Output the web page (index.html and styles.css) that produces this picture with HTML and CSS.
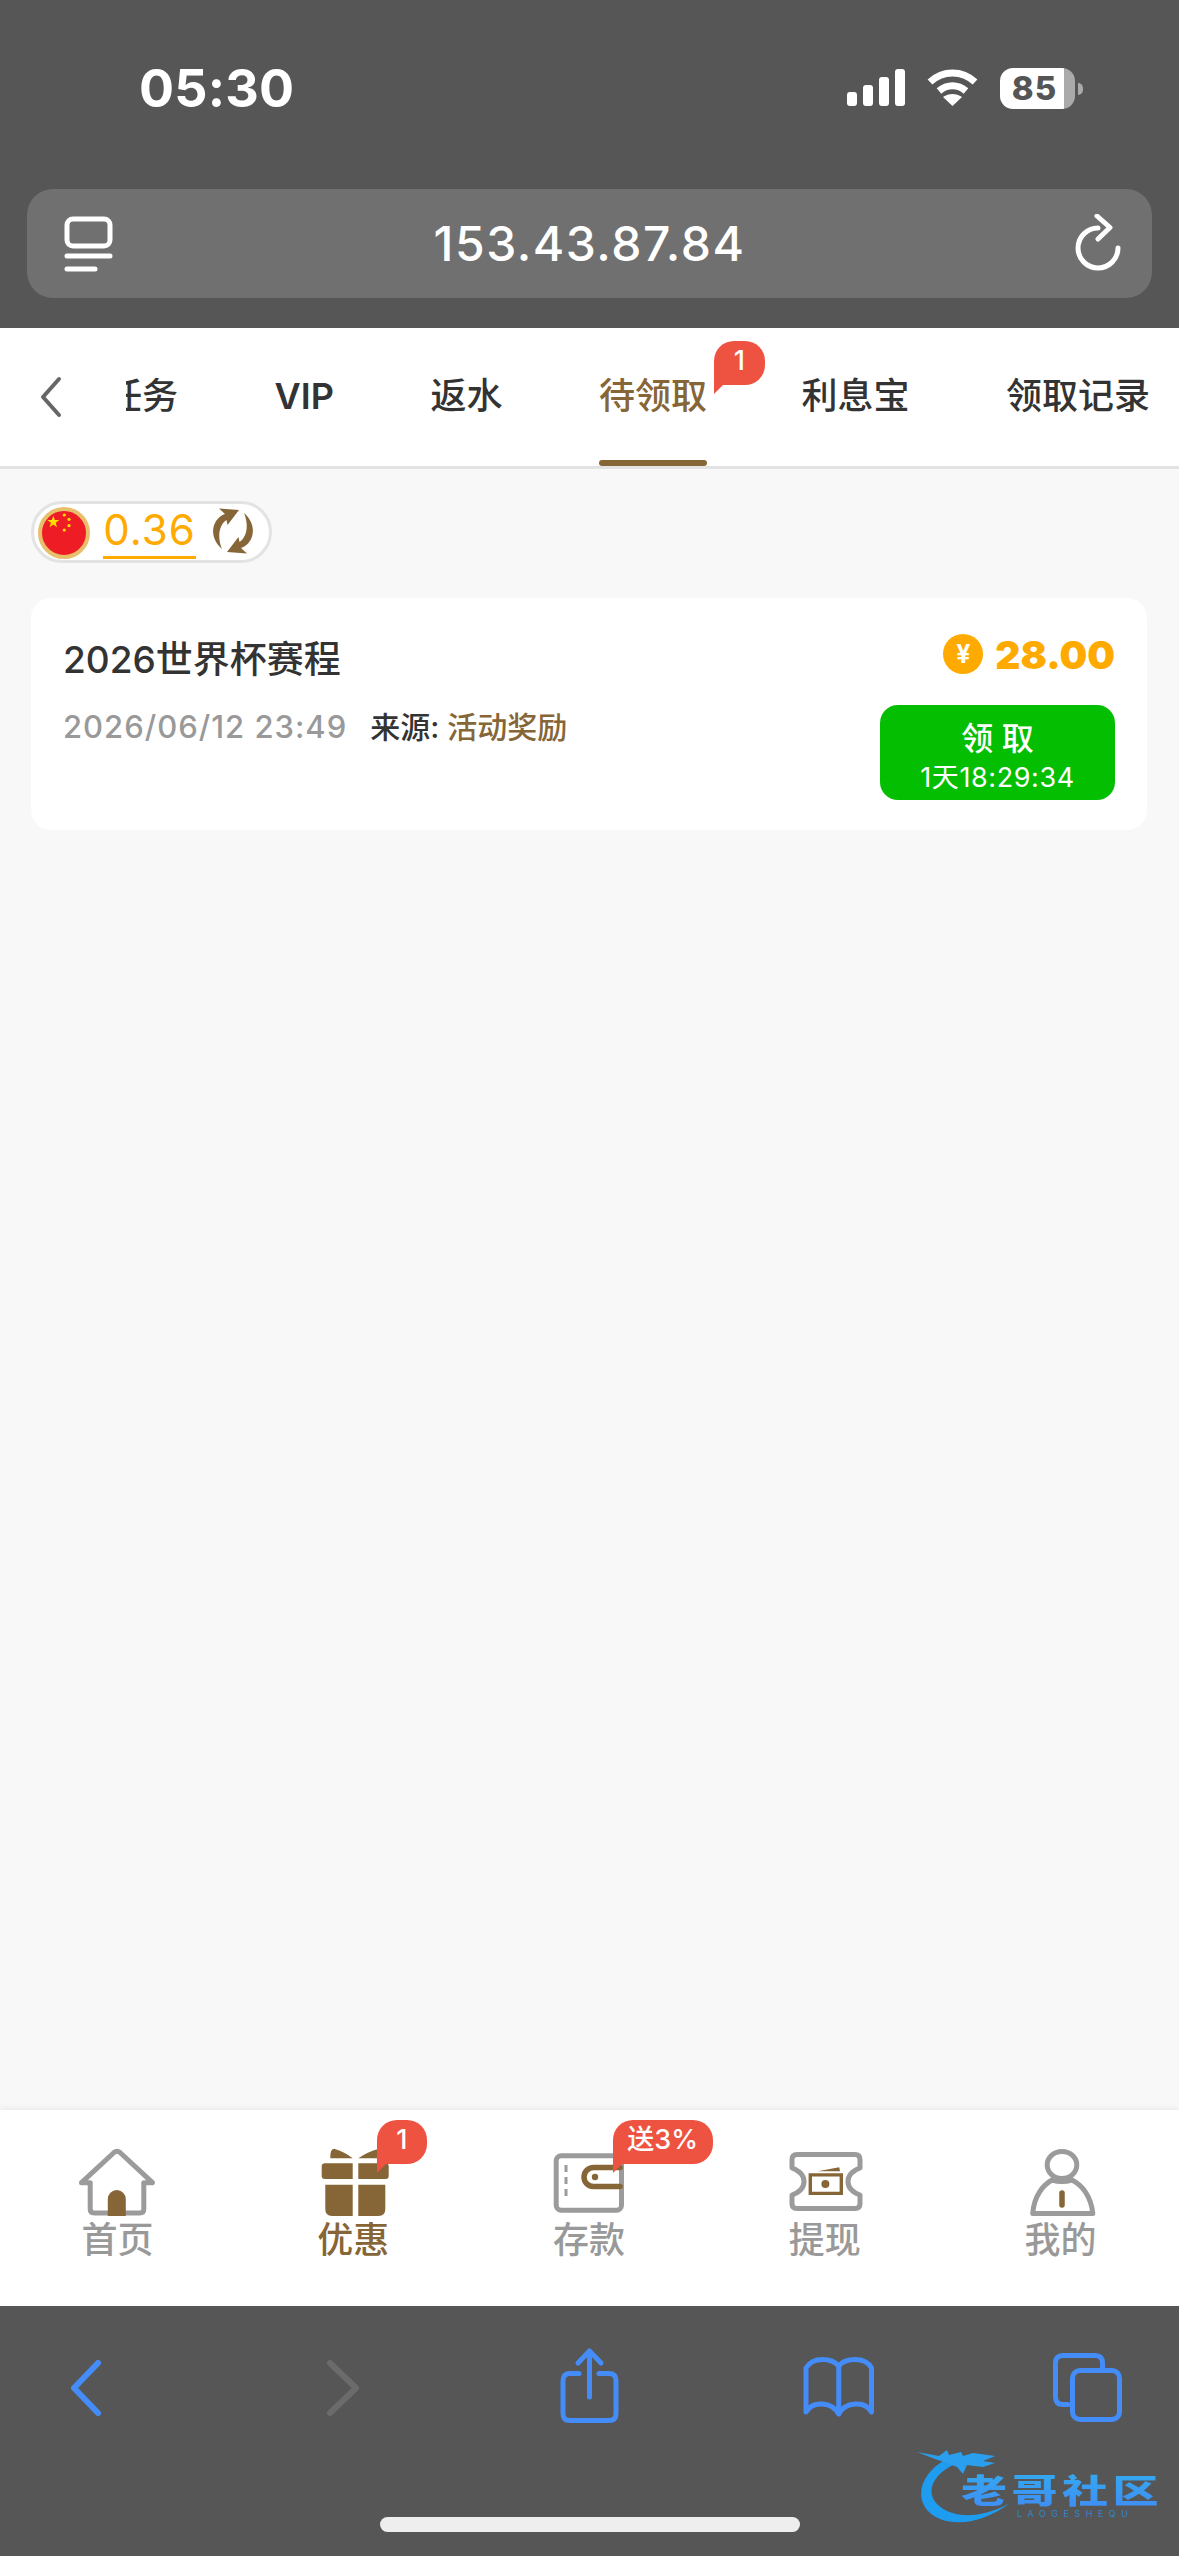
FILE: index.html
```html
<!DOCTYPE html>
<html lang="zh-CN">
<head>
<meta charset="utf-8">
<title>待领取</title>
<link rel="stylesheet" href="styles.css">
</head>
<body>
<div class="page">
  <header class="browser-top">
    <div class="status">
      <span class="time">05:30</span>
      <div class="status-icons">
        <svg class="signal" width="58" height="38" viewBox="0 0 58 38"><rect x="0" y="23" width="10" height="14" rx="3"/><rect x="16" y="16" width="10" height="21" rx="3"/><rect x="32" y="8" width="10" height="29" rx="3"/><rect x="48" y="0" width="10" height="37" rx="3"/></svg>
        <svg class="wifi" width="51" height="38" viewBox="0 0 51 38"><path d="M3 13 C16 1 35 1 48 13" /><path d="M12 22 C20 15 31 15 39 22"/><path class="wifi-dot" d="M25.5 37 L16 28 C22 24 29 24 35 28 Z"/></svg>
        <div class="battery"><span class="battery-num">85</span><i class="battery-tip"></i></div>
      </div>
    </div>
    <div class="urlbar">
      <svg width="56" height="64" viewBox="0 0 56 64" class="url-icon"><rect x="9" y="7" width="43" height="27" rx="6"/><path d="M9 44 H52 M9 57 H37"/></svg>
      <span class="url">153.43.87.84</span>
      <svg width="60" height="60" viewBox="0 0 60 60" class="url-icon"><path d="M53 34 A20 20 0 1 1 33 14"/><path d="M32 2 L45 13.5 L33 25"/></svg>
    </div>
  </header>

  <nav class="tabs">
    <svg class="tabs-back" width="30" height="42" viewBox="0 0 30 42"><path d="M23 3 L7 21 L23 39"/></svg>
    <div class="tab-strip">
      <a class="tab tab-first">任务</a>
      <a class="tab tab-latin">VIP</a>
      <a class="tab">返水</a>
      <a class="tab tab-active">待领取<span class="bubble bubble-tab">1</span></a>
      <a class="tab">利息宝</a>
      <a class="tab">领取记录</a>
    </div>
  </nav>

  <main class="content">
    <div class="balance">
      <svg class="flag" width="52" height="52" viewBox="0 0 52 52">
        <circle cx="26" cy="26" r="24" fill="#ee1c25" stroke="#e8c06c" stroke-width="4"/>
        <polygon fill="#ffde00" points="15.3,8.7 16.8,13 21.3,13 17.7,15.8 19,20.2 15.3,17.5 11.6,20.2 12.9,15.8 9.3,13 13.8,13"/>
        <circle cx="26.3" cy="8" r="1.6" fill="#ffde00"/><circle cx="31" cy="12.3" r="1.6" fill="#ffde00"/><circle cx="31" cy="18.7" r="1.6" fill="#ffde00"/><circle cx="26.3" cy="23" r="1.6" fill="#ffde00"/>
      </svg>
      <span class="balance-num">0.36</span>
      <svg class="sync" width="44" height="46" viewBox="0 0 44 46">
        <path d="M11 41 C-4 28 2 10 14 6 L8 0.5 L28 2 L16.5 17 L15.5 12 C8 17 6 29 11 41 Z"/>
        <path transform="rotate(180 22 23)" d="M11 41 C-4 28 2 10 14 6 L8 0.5 L28 2 L16.5 17 L15.5 12 C8 17 6 29 11 41 Z"/>
      </svg>
    </div>

    <article class="card">
      <div class="card-left">
        <h2 class="card-title">2026世界杯赛程</h2>
        <div class="card-meta"><span class="date">2026/06/12 23:49</span><span class="source">来源: <b>活动奖励</b></span></div>
      </div>
      <div class="card-right">
        <div class="amount"><span class="coin">¥</span><span class="amount-num">28.00</span></div>
        <button class="claim"><span class="claim-main">领 取</span><span class="claim-time">1天18:29:34</span></button>
      </div>
    </article>
  </main>

  <nav class="tabbar">
    <a class="nav-item">
      <svg class="nav-icon" width="90" height="80" viewBox="1.5 0 90 80">
        <path class="line" d="M10 36.7 L42.5 6.5 q3 -2.5 6 0 L81 36.7 H72.3 V63 q0 4 -4 4 H22.7 q-4 0 -4 -4 V36.7 Z"/>
        <path class="solid" d="M36.3 70 V53 a9 9 0 0 1 18 0 V70 Z"/>
      </svg>
      <span class="nav-label">首页</span>
    </a>
    <a class="nav-item nav-active">
      <svg class="nav-icon" width="90" height="80" viewBox="0 0 90 80">
        <path class="solid" d="M21.3 12.3 Q21 3 25 2.7 Q36 6 43.7 12.3 Z M49.3 12.3 Q58 6 70 2.7 L73 12.3 Z"/>
        <path class="solid" d="M16 17.3 H43.7 V33 H16 q-3.3 0 -3.3 -3 V20.3 q0 -3 3.3 -3 Z M49.3 17.3 H76.7 q3 0 3 3 V30 q0 3 -3 3 H49.3 Z"/>
        <path class="solid" d="M16.3 38.7 H43.7 V70 H23 q-6.7 0 -6.7 -6.7 Z M49.3 38.7 H76.3 V63.3 q0 6.7 -6.7 6.7 H49.3 Z"/>
      </svg>
      <span class="nav-label">优惠</span>
      <span class="bubble bubble-nav">1</span>
    </a>
    <a class="nav-item">
      <svg class="nav-icon" width="90" height="80" viewBox="0 0 90 80">
        <rect class="line" x="12.2" y="9.8" width="65.3" height="54.4" rx="5"/>
        <path class="dash" d="M22 19 V54"/>
        <path class="brown-line" d="M76 21.5 H49.5 a9.5 9.5 0 0 0 0 19 H76"/>
        <circle class="solid" cx="51" cy="31" r="3.2"/>
      </svg>
      <span class="nav-label">存款</span>
      <span class="bubble bubble-nav bubble-wide">送3%</span>
    </a>
    <a class="nav-item">
      <svg class="nav-icon" width="90" height="80" viewBox="0 0 90 80">
        <path class="line" d="M17 8.5 H75 q5 0 5 5 V22 C72 25 68 30 68 35.5 C68 41 72 46 80 49 V57.5 q0 5 -5 5 H17 q-5 0 -5 -5 V49 C20 46 24 41 24 35.5 C24 30 20 25 12 22 V13.5 q0 -5 5 -5 Z"/>
        <path class="solid" fill-rule="evenodd" d="M28.6 27.3 H63 V49 H28.6 Z M32 30.5 V45.8 H59.6 V30.5 Z"/>
        <circle class="solid" cx="45.4" cy="38" r="4"/>
        <polygon class="solid" points="37.8,25.3 59.2,21.3 60,25.3"/>
      </svg>
      <span class="nav-label">提现</span>
    </a>
    <a class="nav-item">
      <svg class="nav-icon" width="90" height="80" viewBox="0 0 90 80">
        <ellipse class="line" cx="46" cy="19" rx="14.8" ry="13.5"/>
        <path class="line" d="M16.7 67.5 C18 50 27 39 36 34 Q46 37 56 34 C66 39 75 50 76.8 67.5 Z"/>
        <path class="brown-line" d="M46 47 V59"/>
      </svg>
      <span class="nav-label">我的</span>
    </a>
  </nav>

  <footer class="toolbar">
    <svg class="tool" width="76" height="80" viewBox="0 0 76 80"><path d="M50 17 L26 42 L50 67"/></svg>
    <svg class="tool tool-off" width="76" height="80" viewBox="0 0 76 80"><path d="M32 17 L58 42 L32 67"/></svg>
    <svg class="tool tool-thin" width="76" height="80" viewBox="0 0 76 80"><path d="M30 27.5 H21 q-7 0 -7 7 V67.5 q0 7 7 7 H60 q7 0 7 -7 V34.5 q0 -7 -7 -7 H50"/><path d="M40.5 51 V6 M29 17 L40.5 5 L52 17"/></svg>
    <svg class="tool tool-thin" width="76" height="80" viewBox="0 0 76 80"><path d="M39.75 20 C33 12 14 10 7 22 V66 C14 54 33 56 39.75 68 C46 56 66 54 72.5 66 V22 C66 10 46 12 39.75 20 Z M39.75 20 V68"/></svg>
    <svg class="tool tool-thin" width="76" height="80" viewBox="0 0 76 80"><path d="M19 58.5 H14 q-7.5 0 -7.5 -7.5 V17 q0 -7.5 7.5 -7.5 H46 q7.5 0 7.5 7.5 V22"/><rect x="23.5" y="24.5" width="47" height="49" rx="7.5"/></svg>
    <div class="home-bar"></div>
    <div class="watermark">
      <svg class="dragon" width="100" height="90" viewBox="0 0 100 90">
        <path fill="#1e9df0" d="M28 14 C6 26 -4 50 12 66 C26 80 60 82 93 57 C62 74 34 72 20 58 C8 46 16 28 38 18 Z"/>
        <path fill="#2a9ff0" d="M0 6 L22 10 L30 4 L32 9 L44 6 L46 10 L56 7 L78 10 L66 15 L78 17 L66 21 L50 19 L46 28 L40 21 L30 17 L18 13 Z"/>
      </svg>
      <span class="wm-cn">老哥社区</span>
      <span class="wm-en">LAOGESHEQU</span>
    </div>
  </footer>
</div>
</body>
</html>
```
FILE: styles.css
```css
* { box-sizing: border-box; }
html, body { margin: 0; padding: 0; }
body { font-family: Inter, "Noto Sans CJK SC", sans-serif; background: #f8f8f8; }
.page { position: relative; width: 1179px; height: 2556px; display: flex; flex-direction: column; overflow: hidden; }

.browser-top { height: 328px; background: #565656; padding: 0 27px; flex: none; }
.status { height: 176px; margin-bottom: 13px; display: flex; align-items: center; justify-content: space-between; padding: 0 69px 0 112px; }
.time { color: #fff; font-size: 52px; font-weight: 700; letter-spacing: 0.2px; }
.status-icons { display: flex; align-items: center; gap: 22px; }
.signal { fill: #fff; }
.wifi { fill: none; stroke: #fff; stroke-width: 7; }
.wifi-dot { fill: #fff; stroke: none; }
.battery { position: relative; width: 75px; height: 41px; border-radius: 13px; background: linear-gradient(90deg, #fff 85%, #aaa 85%); display: flex; align-items: center; justify-content: center; padding-right: 6px; margin-right: 8px; }
.battery-num { color: #555; font-size: 33px; font-weight: 800; line-height: 1; letter-spacing: 1px; }
.battery-tip { position: absolute; left: 78px; top: 15px; width: 5px; height: 12px; background: #aaa; border-radius: 0 6px 6px 0; }

.urlbar { height: 109px; background: #707070; border-radius: 26px; display: flex; align-items: center; justify-content: space-between; padding: 0 27px 0 31px; }
.url { color: #fff; font-size: 48px; font-weight: 500; letter-spacing: 1.5px; }
.url-icon { fill: none; stroke: #fff; stroke-width: 5; stroke-linecap: round; stroke-linejoin: round; }

.tabs { height: 141px; flex: none; background: #fff; border-bottom: 3px solid #e3e3e3; display: flex; }
.tabs-back { flex: none; margin: 48px 60px 0 36px; fill: none; stroke: #666; stroke-width: 4; stroke-linecap: round; stroke-linejoin: round; }
.tab-strip { flex: 1; display: flex; gap: 96.5px; overflow: hidden; }
.tab { position: relative; flex: none; height: 138px; line-height: 136px; font-size: 36px; font-weight: 500; color: #333; }
.tab-first { margin-left: -20px; }
.tab-latin { font-weight: 600; }
.tab-active { color: #866537; margin-right: -2px; }
.tab-active::after { content: ""; position: absolute; left: 0; right: 0; bottom: 0; height: 6px; border-radius: 4px; background: #866537; }

.bubble { position: absolute; left: 141px; top: 10px; width: 50px; height: 44px; border-radius: 20px 20px 20px 0; background: #ee5240; color: #fff; font-size: 27px; font-weight: 500; line-height: 40px; text-align: center; }
.bubble::after { content: ""; position: absolute; left: 0; top: 100%; width: 0; height: 0; border-top: 9px solid #ee5240; border-right: 9px solid transparent; }
.bubble-tab { left: 115px; top: 13px; width: 51px; }
.bubble-wide { width: 100px; white-space: nowrap; }

.content { flex: 1; padding: 32px 32px 0 31px; display: flex; flex-direction: column; align-items: stretch; }
.balance { align-self: flex-start; width: 241px; height: 62px; border: 3px solid #e3e3e3; border-radius: 31px; background: #fff; display: flex; padding-left: 4px; }
.flag { flex: none; margin-top: 3px; }
.balance-num { width: 93px; height: 55px; margin-left: 13px; border-bottom: 3px solid #ffaa00; color: #ffaa00; font-size: 42px; line-height: 52px; text-align: center; letter-spacing: 1px; }
.sync { flex: none; margin: 4px 0 0 15px; fill: #866537; }

.card { margin-top: 35px; height: 232px; background: #fff; border-radius: 20px; padding: 36px 32px 0; display: flex; justify-content: space-between; }
.card-title { margin: 0; font-size: 37px; font-weight: 500; line-height: 50px; color: #333; transform: translateY(1px); }
.card-meta { margin-top: 18px; display: flex; gap: 23px; line-height: 50px; font-size: 30px; font-weight: 500; }
.date { color: #999; letter-spacing: 1px; font-size: 31px; }
.source { color: #333; }
.source b { color: #866537; font-weight: 500; }
.card-right { display: flex; flex-direction: column; align-items: flex-end; }
.amount { height: 40px; display: flex; align-items: center; gap: 12px; }
.coin { width: 40px; height: 40px; border-radius: 50%; background: #ffaa00; color: #fff; font-size: 25px; font-weight: 700; line-height: 40px; text-align: center; }
.amount-num { color: #ffaa00; font-size: 39px; font-weight: 900; letter-spacing: 0; }
.claim { margin-top: 31px; width: 235px; height: 95px; border: 0; border-radius: 18px; background: #04be02; color: #fff; display: flex; flex-direction: column; align-items: center; padding: 14px 0 0; font-family: inherit; }
.claim-main { font-size: 32px; font-weight: 500; line-height: 40px; }
.claim-time { font-size: 27px; line-height: 32px; margin-top: 3px; letter-spacing: 0.6px; }

.tabbar { height: 196px; flex: none; background: #fff; box-shadow: 0 -2px 6px rgba(0,0,0,.06); display: grid; grid-template-columns: repeat(5, 1fr); padding-top: 36px; }
.nav-item { position: relative; display: flex; flex-direction: column; align-items: center; margin-top: -36px; padding-top: 36px; }
.nav-icon { flex: none; }
.nav-label { font-size: 36px; font-weight: 500; line-height: 28px; color: #999; margin-left: -1px; }
.nav-active .nav-label { color: #866537; }
.line { fill: none; stroke: #9b9b9b; stroke-width: 5; stroke-linejoin: round; }
.solid { fill: #866537; }
.brown-line { fill: none; stroke: #866537; stroke-width: 5.5; stroke-linecap: round; }
.dash { fill: none; stroke: #9b9b9b; stroke-width: 3; stroke-dasharray: 7 5; }

.toolbar { position: relative; height: 250px; flex: none; background: #565656; display: flex; align-items: flex-start; justify-content: space-between; padding: 40px 54px 0 48px; }
.tool { flex: none; fill: none; stroke: #448cf7; stroke-width: 6; stroke-linecap: round; stroke-linejoin: round; }
.tool-off { stroke: #6b6b6b; }
.tool-thin { stroke-width: 5; }
.home-bar { position: absolute; left: 380px; top: 211px; width: 420px; height: 15px; border-radius: 8px; background: #eee; }
.watermark { position: absolute; left: 917px; top: 140px; width: 250px; height: 90px; }
.dragon { position: absolute; left: 0; top: 0; }
.wm-cn { position: absolute; left: 44px; top: 20px; font-size: 46px; font-weight: 900; line-height: 50px; letter-spacing: 4.5px; white-space: nowrap; transform: scaleY(0.72); background: linear-gradient(180deg, #35a8f0, #3f8df5); -webkit-background-clip: text; background-clip: text; color: transparent; }
.wm-en { position: absolute; left: 100px; top: 62px; font-size: 9px; letter-spacing: 5.5px; line-height: 12px; color: #2f86c8; white-space: nowrap; }
```
